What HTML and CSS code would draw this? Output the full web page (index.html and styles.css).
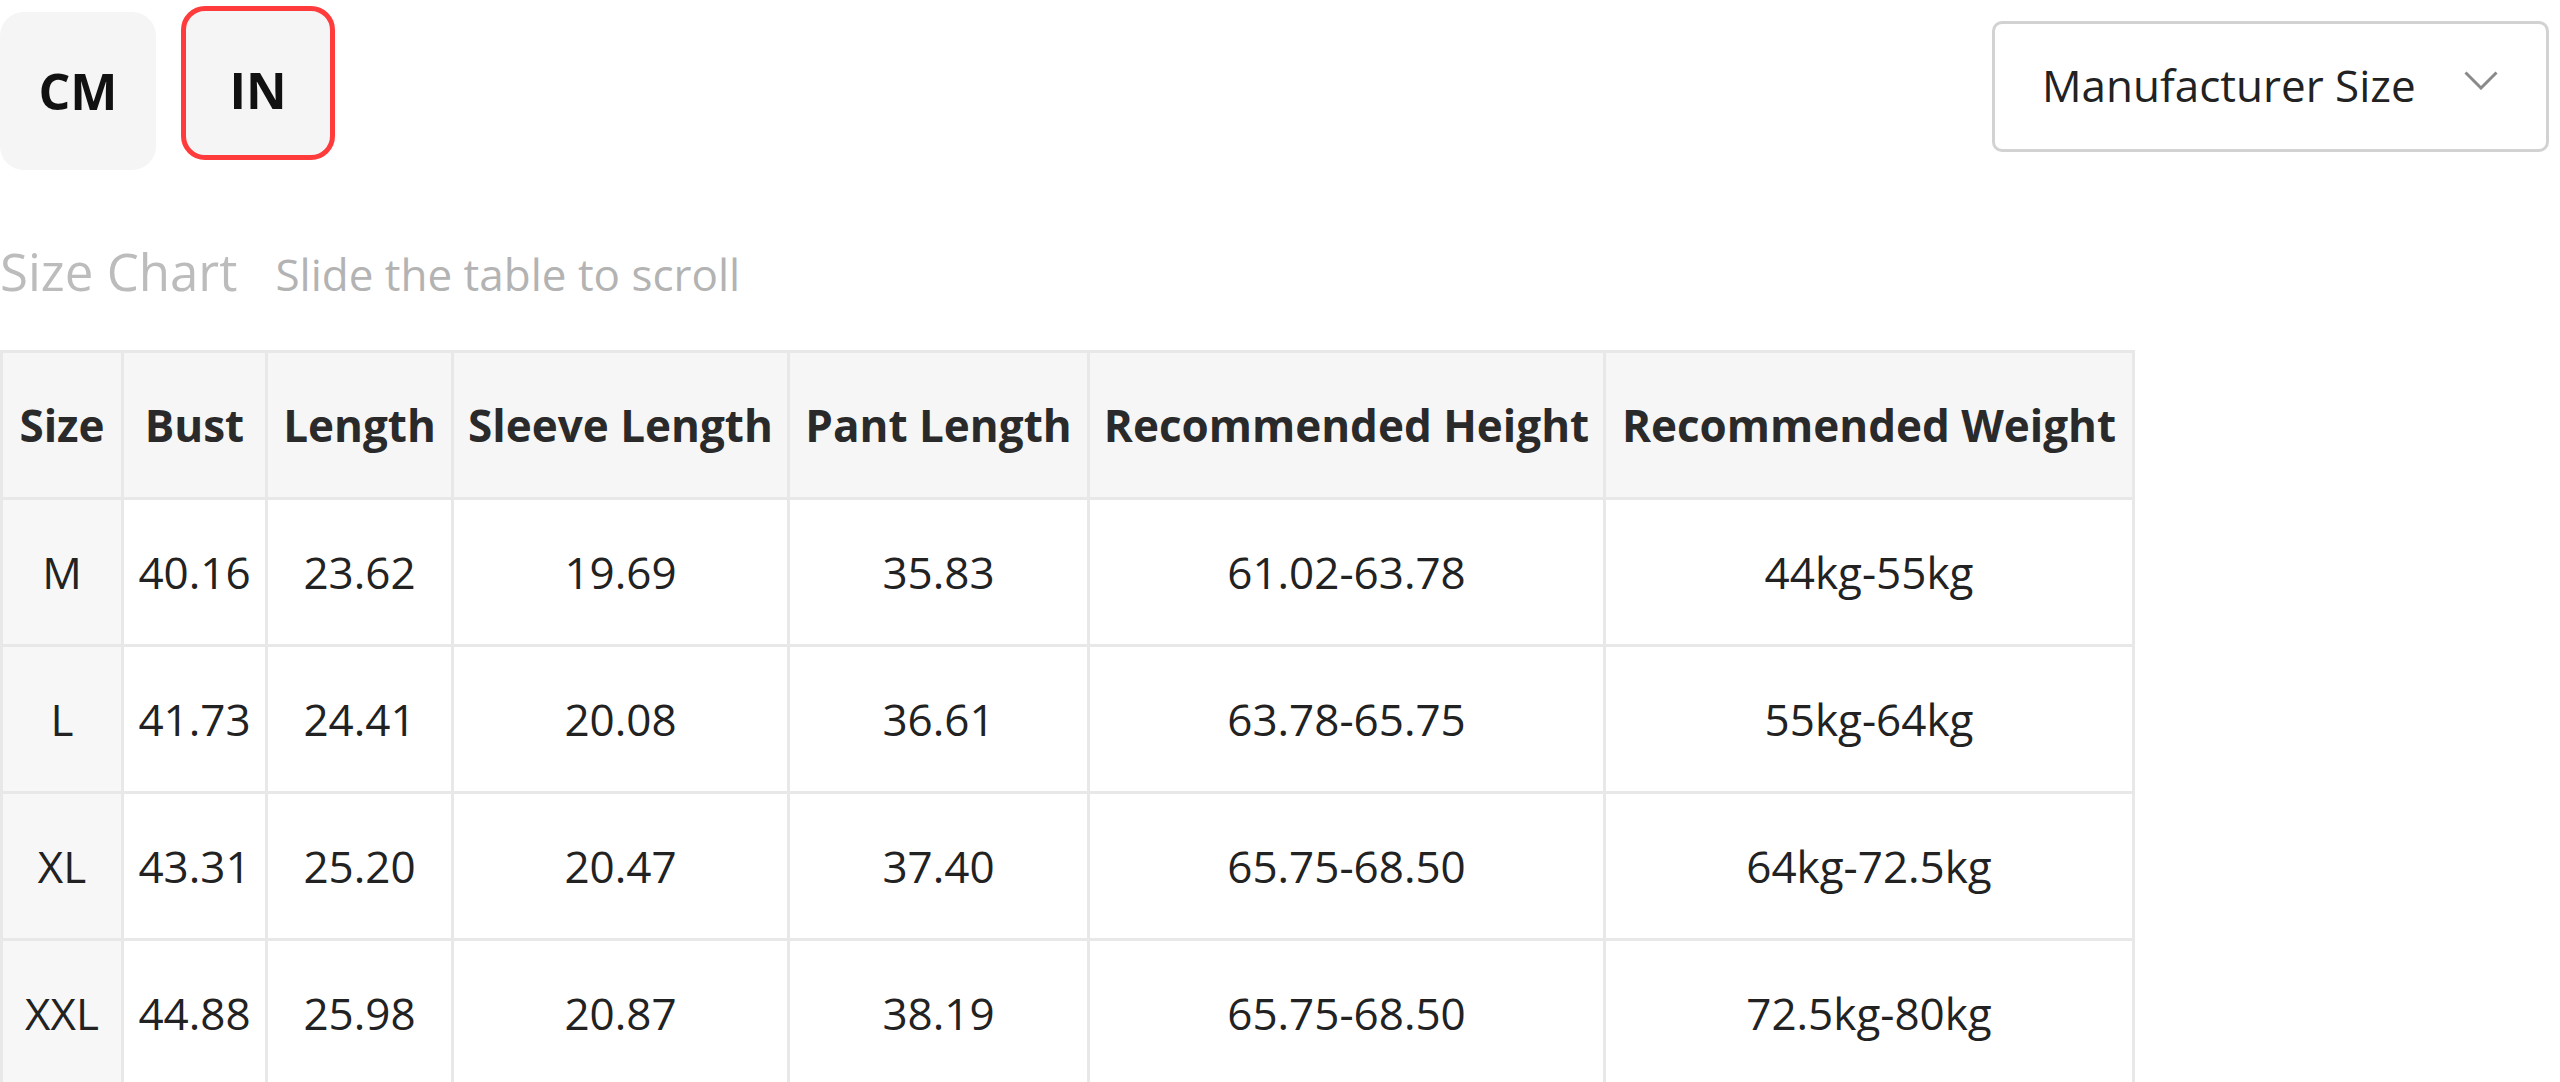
FILE: index.html
```html
<!DOCTYPE html>
<html lang="en">
<head>
<meta charset="utf-8">
<title>Size Chart</title>
<link rel="stylesheet" href="styles.css">
</head>
<body>
<div class="page">
  <div class="top-row">
    <div class="units">
      <div class="unit-btn unit-cm">CM</div>
      <div class="unit-btn unit-in">IN</div>
    </div>
    <div class="size-select">
      <span class="select-label">Manufacturer Size</span>
      <svg class="chevron" viewBox="0 0 34 19" width="34" height="19" aria-hidden="true">
        <path d="M1.5 1.5 L17 17 L32.5 1.5" fill="none" stroke="#8a8a8a" stroke-width="3"/>
      </svg>
    </div>
  </div>

  <div class="title-row">
    <span class="title">Size Chart</span>
    <span class="hint">Slide the table to scroll</span>
  </div>

  <table class="chart">
    <colgroup>
      <col class="c-size">
      <col class="c-bust">
      <col class="c-length">
      <col class="c-sleeve">
      <col class="c-pant">
      <col class="c-height">
      <col class="c-weight">
    </colgroup>
    <thead>
      <tr>
        <th>Size</th>
        <th>Bust</th>
        <th>Length</th>
        <th>Sleeve Length</th>
        <th>Pant Length</th>
        <th>Recommended Height</th>
        <th>Recommended Weight</th>
      </tr>
    </thead>
    <tbody>
      <tr>
        <td class="size-cell">M</td>
        <td>40.16</td>
        <td>23.62</td>
        <td>19.69</td>
        <td>35.83</td>
        <td>61.02-63.78</td>
        <td>44kg-55kg</td>
      </tr>
      <tr>
        <td class="size-cell">L</td>
        <td>41.73</td>
        <td>24.41</td>
        <td>20.08</td>
        <td>36.61</td>
        <td>63.78-65.75</td>
        <td>55kg-64kg</td>
      </tr>
      <tr>
        <td class="size-cell">XL</td>
        <td>43.31</td>
        <td>25.20</td>
        <td>20.47</td>
        <td>37.40</td>
        <td>65.75-68.50</td>
        <td>64kg-72.5kg</td>
      </tr>
      <tr>
        <td class="size-cell">XXL</td>
        <td>44.88</td>
        <td>25.98</td>
        <td>20.87</td>
        <td>38.19</td>
        <td>65.75-68.50</td>
        <td>72.5kg-80kg</td>
      </tr>
    </tbody>
  </table>
</div>
</body>
</html>
```

FILE: styles.css
```css
html, body {
  margin: 0;
  padding: 0;
  background: #ffffff;
}

body {
  font-family: "Open Sans", "Noto Sans", "Liberation Sans", sans-serif;
  color: #222222;
}

.page {
  width: 2560px;
}

.top-row {
  display: flex;
  justify-content: space-between;
  align-items: flex-start;
  height: 168px;
}

.units {
  display: flex;
  align-items: flex-start;
  gap: 25px;
}

.unit-btn {
  box-sizing: border-box;
  display: flex;
  align-items: center;
  justify-content: center;
  background: #f5f5f5;
  border-radius: 24px;
  font-size: 50px;
  font-weight: 700;
  color: #111111;
  line-height: 1;
}

.unit-cm {
  width: 156px;
  height: 158px;
  margin-top: 12px;
}

.unit-in {
  width: 154px;
  height: 154px;
  margin-top: 6px;
  border: 5px solid #ff3b3b;
  padding-top: 14px;
}

.size-select {
  box-sizing: border-box;
  display: flex;
  align-items: center;
  justify-content: space-between;
  width: 557px;
  height: 131px;
  margin-top: 21px;
  margin-right: 11px;
  padding: 0 48px 0 47px;
  border: 3px solid #d2d2d2;
  border-radius: 10px;
  font-size: 44px;
  color: #222222;
}

.select-label {
  line-height: 1;
  padding-bottom: 4px;
}

.chevron {
  display: block;
  margin-top: -12px;
}

.title-row {
  display: flex;
  align-items: baseline;
  gap: 38px;
  margin-top: 69px;
  line-height: 68px;
}

.title {
  font-size: 51px;
  color: #bcbcbc;
}

.hint {
  font-size: 44px;
  color: #b3b3b3;
}

.chart {
  border-collapse: collapse;
  table-layout: fixed;
  width: 2132px;
  margin-top: 42px;
  font-size: 44px;
  white-space: nowrap;
}

.c-size { width: 121px; }
.c-bust { width: 144px; }
.c-length { width: 186px; }
.c-sleeve { width: 336px; }
.c-pant { width: 300px; }
.c-height { width: 516px; }
.c-weight { width: 529px; }

.chart th,
.chart td {
  height: 144px;
  padding: 0;
  border: 3px solid #e8e8e8;
  text-align: center;
  vertical-align: middle;
  overflow: visible;
}

.chart th {
  background: #f6f6f6;
  font-weight: 700;
  color: #2a2a2a;
}

.chart td {
  font-weight: 400;
  color: #222222;
}

.chart td.size-cell {
  background: #f7f7f7;
}
```
